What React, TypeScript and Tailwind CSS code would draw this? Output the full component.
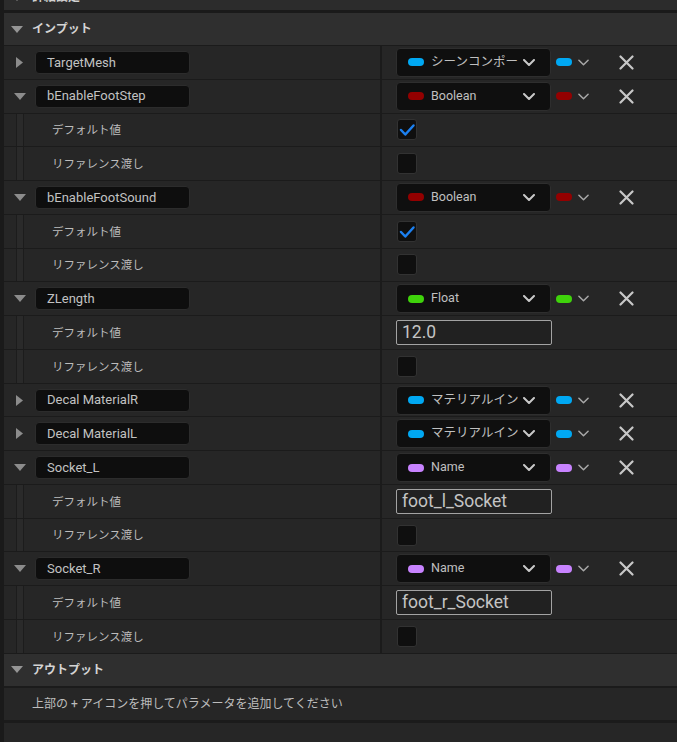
import React from "react";

type Param = {
  name: string;
  type: string;
  color: string;
  open: boolean;
  value?: boolean | string;
};

const params: Param[] = [
  { name: "TargetMesh", type: "シーンコンポーネント", color: "bg-[#00a8f3]", open: false },
  { name: "bEnableFootStep", type: "Boolean", color: "bg-[#930000]", open: true, value: true },
  { name: "bEnableFootSound", type: "Boolean", color: "bg-[#930000]", open: true, value: true },
  { name: "ZLength", type: "Float", color: "bg-[#3fd30b]", open: true, value: "12.0" },
  { name: "Decal MaterialR", type: "マテリアルインスタンス", color: "bg-[#00a8f3]", open: false },
  { name: "Decal MaterialL", type: "マテリアルインスタンス", color: "bg-[#00a8f3]", open: false },
  { name: "Socket_L", type: "Name", color: "bg-[#c883ff]", open: true, value: "foot_l_Socket" },
  { name: "Socket_R", type: "Name", color: "bg-[#c883ff]", open: true, value: "foot_r_Socket" },
];

function ArrowDown({ className = "" }: { className?: string }) {
  return (
    <svg width="12" height="7" viewBox="0 0 12 7" className={className}>
      <path d="M0 0h12L6 7z" fill="currentColor" />
    </svg>
  );
}

function ArrowRight() {
  return (
    <svg width="7" height="11" viewBox="0 0 7 11">
      <path d="M0 0l7 5.5L0 11z" fill="currentColor" />
    </svg>
  );
}

function Chevron({ w = 12, stroke = 2 }: { w?: number; stroke?: number }) {
  return (
    <svg width={w} height="7" viewBox="0 0 12 7" fill="none">
      <path d="M1 1l5 5 5-5" stroke="currentColor" strokeWidth={stroke} strokeLinecap="round" strokeLinejoin="round" />
    </svg>
  );
}

function Row({ left, right }: { left: React.ReactNode; right: React.ReactNode }) {
  return (
    <div className="flex h-[33.78px] border-b border-[#1b1b1b] bg-[#262626]">
      <div className="flex w-[378px] shrink-0 items-center border-r-2 border-[#1b1b1b]">{left}</div>
      <div className="flex flex-1 items-center">{right}</div>
    </div>
  );
}

function SubLabel({ text }: { text: string }) {
  return (
    <div className="flex h-full items-center">
      <div className="ml-[12px] h-full w-[8px] border-x border-[#1c1c1c] bg-[#2a2a2a]" />
      <span className="ml-[28px] pt-[2px] text-[11.5px] text-[#bdbdbd]">{text}</span>
    </div>
  );
}

function CheckBox({ checked }: { checked: boolean }) {
  return (
    <div className="ml-[15px] flex h-[21px] w-[20px] items-center justify-center rounded-[3px] border border-[#323232] bg-[#0f0f0f]">
      {checked && (
        <svg width="18" height="19" viewBox="0 0 18 19" fill="none">
          <path d="M3 10l4.3 4.5L15.5 5.5" stroke="#1c80f0" strokeWidth="2.5" strokeLinecap="round" strokeLinejoin="round" />
        </svg>
      )}
    </div>
  );
}

function TextInput({ value }: { value: string }) {
  return (
    <div className="ml-[14px] flex h-[25px] w-[156px] items-center rounded-[2px] border-[1.5px] border-[#a3a3a3] bg-[#212121] pl-[5px] text-[17.5px] leading-none text-[#c4c4c4]">
      {value}
    </div>
  );
}

function ParamRows({ p }: { p: Param }) {
  return (
    <>
      <Row
        left={
          <>
            <div className="flex w-[31px] justify-center text-[#8c8c8c]">{p.open ? <ArrowDown /> : <ArrowRight />}</div>
            <div className="flex h-[23px] w-[155px] items-center rounded-[4px] border border-[#2c2c2c] bg-[#0e0e0e] pl-[11px] text-[13px] text-[#c2c2c2]">
              {p.name}
            </div>
          </>
        }
        right={
          <div className="ml-[14px] flex items-center">
            <div className="flex h-[29px] w-[155px] items-center rounded-[4px] border border-[#2e2e2e] bg-[#0f0f0f] pl-[11px] pr-[15px]">
              <div className={`h-[8px] w-[16px] shrink-0 rounded-full ${p.color}`} />
              <div className="ml-[7px] flex-1 overflow-hidden whitespace-nowrap text-[12.5px] text-[#c0c0c0]">{p.type}</div>
              <div className="ml-[5px] text-[#c8c8c8]">
                <Chevron />
              </div>
            </div>
            <div className={`ml-[5px] h-[8px] w-[16px] rounded-full ${p.color}`} />
            <div className="ml-[6px] text-[#a8a8a8]">
              <Chevron w={11} stroke={1.6} />
            </div>
            <svg className="ml-[30px]" width="15" height="15" viewBox="0 0 15 15" fill="none">
              <path d="M1.5 1.5l12 12M13.5 1.5l-12 12" stroke="#c8c8c8" strokeWidth="2.2" strokeLinecap="round" />
            </svg>
          </div>
        }
      />
      {p.open && (
        <>
          <Row
            left={<SubLabel text="デフォルト値" />}
            right={typeof p.value === "string" ? <TextInput value={p.value} /> : <CheckBox checked={!!p.value} />}
          />
          <Row left={<SubLabel text="リファレンス渡し" />} right={<CheckBox checked={false} />} />
        </>
      )}
    </>
  );
}

export default function App() {
  return (
    <div className="h-[742px] w-full overflow-hidden bg-[#1a1a1a] pl-[4px] font-['Roboto','Noto_Sans_CJK_JP',sans-serif]">
      {/* cut-off category above */}
      <div className="h-[10px] overflow-hidden bg-[#2c2c2c]">
        <div className="-mt-[19px] flex h-[32px] items-center">
          <ArrowDown className="ml-[7px] text-[#8f8f8f]" />
          <span className="ml-[9px] text-[12px] font-bold text-[#d0d0d0]">詳細設定</span>
        </div>
      </div>
      <div className="mt-[3px] flex h-[33px] items-center border-b border-[#1b1b1b] bg-[#2f2f2f]">
        <ArrowDown className="ml-[7px] text-[#959595]" />
        <span className="ml-[9px] text-[12px] font-bold text-[#d4d4d4]">インプット</span>
      </div>
      {params.map((p) => (
        <ParamRows key={p.name} p={p} />
      ))}
      <div className="flex h-[34px] items-center border-b-2 border-[#1b1b1b] bg-[#2f2f2f]">
        <ArrowDown className="ml-[7px] text-[#959595]" />
        <span className="ml-[9px] text-[12px] font-bold text-[#d4d4d4]">アウトプット</span>
      </div>
      <div className="flex h-[35px] items-center border-b-[3px] border-[#1b1b1b] bg-[#262626] pl-[28px] text-[12px] text-[#bdbdbd]">
        上部の + アイコンを押してパラメータを追加してください
      </div>
      <div className="h-[30px] bg-[#262626]" />
    </div>
  );
}
